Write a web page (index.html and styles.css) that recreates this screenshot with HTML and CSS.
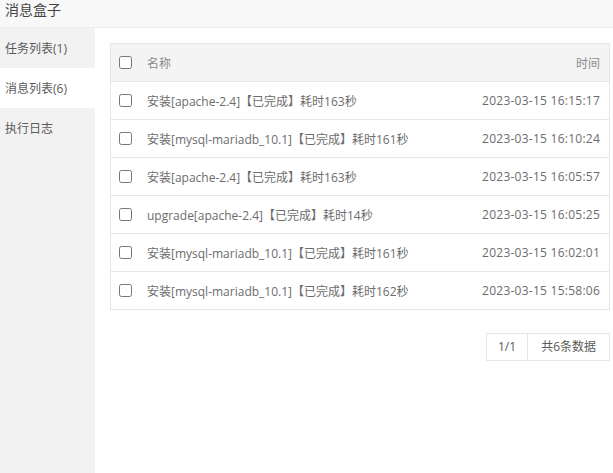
FILE: index.html
```html
<!DOCTYPE html>
<html lang="zh-CN">
<head>
<meta charset="utf-8">
<title>消息盒子</title>
<link rel="stylesheet" href="styles.css">
</head>
<body>
<div class="page">
  <div class="header">消息盒子</div>
  <div class="layout">
    <ul class="side">
      <li class="side-item">任务列表(1)</li>
      <li class="side-item active">消息列表(6)</li>
      <li class="side-item">执行日志</li>
    </ul>
    <div class="main">
      <table class="grid">
        <thead>
          <tr>
            <th class="c-check"><input type="checkbox"></th>
            <th class="c-name">名称</th>
            <th class="c-time">时间</th>
          </tr>
        </thead>
        <tbody>
          <tr><td class="c-check"><input type="checkbox"></td><td class="c-name">安装[apache-2.4]【已完成】耗时163秒</td><td class="c-time">2023-03-15 16:15:17</td></tr>
          <tr><td class="c-check"><input type="checkbox"></td><td class="c-name">安装[mysql-mariadb_10.1]【已完成】耗时161秒</td><td class="c-time">2023-03-15 16:10:24</td></tr>
          <tr><td class="c-check"><input type="checkbox"></td><td class="c-name">安装[apache-2.4]【已完成】耗时163秒</td><td class="c-time">2023-03-15 16:05:57</td></tr>
          <tr><td class="c-check"><input type="checkbox"></td><td class="c-name">upgrade[apache-2.4]【已完成】耗时14秒</td><td class="c-time">2023-03-15 16:05:25</td></tr>
          <tr><td class="c-check"><input type="checkbox"></td><td class="c-name">安装[mysql-mariadb_10.1]【已完成】耗时161秒</td><td class="c-time">2023-03-15 16:02:01</td></tr>
          <tr><td class="c-check"><input type="checkbox"></td><td class="c-name">安装[mysql-mariadb_10.1]【已完成】耗时162秒</td><td class="c-time">2023-03-15 15:58:06</td></tr>
        </tbody>
      </table>
      <div class="pager">
        <span class="pg pg-num">1/1</span><span class="pg pg-count">共6条数据</span>
      </div>
    </div>
  </div>
</div>
</body>
</html>
```

FILE: styles.css
```css
html, body {
  margin: 0;
  padding: 0;
  background: #fff;
}
body {
  font-family: "Open Sans", "Noto Sans CJK SC", sans-serif;
  font-size: 12px;
  color: #6c6c6c;
}
.page {
  display: flex;
  flex-direction: column;
  height: 100vh;
}
.header {
  height: 27px;
  line-height: 19px;
  padding: 0 5px;
  font-size: 14px;
  color: #444;
  background: #f8f8f8;
  border-bottom: 1px solid #ececec;
  flex: none;
}
.layout {
  flex: 1;
  display: flex;
}
.side {
  list-style: none;
  margin: 0;
  padding: 0;
  width: 95px;
  background: #f2f2f2;
  flex: none;
}
.side-item {
  height: 40px;
  line-height: 42px;
  padding-left: 5px;
  color: #5a5a5a;
}
.side-item.active {
  background: #fff;
}
.main {
  flex: 1;
  padding: 15px 3px 0 15px;
}
.grid {
  width: 500px;
  border-collapse: collapse;
  border: 1px solid #e6e6e6;
}
.grid th,
.grid td {
  height: 37px;
  padding: 0;
  border-bottom: 1px solid #e6e6e6;
  font-weight: normal;
  vertical-align: middle;
  white-space: nowrap;
}
.grid thead tr {
  background: #f4f4f4;
}
.grid th {
  color: #8a8a8a;
}
.c-check {
  width: 28px;
  padding-left: 8px !important;
  text-align: left;
}
.c-check input {
  display: block;
  margin: 0;
  width: 13px;
  height: 13px;
}
.c-name {
  text-align: left;
}
.c-time {
  text-align: right;
  padding-right: 9px !important;
}
td.c-time {
  letter-spacing: 0.25px;
}
.pager {
  display: flex;
  justify-content: flex-end;
  margin-top: 23px;
  width: 500px;
}
.pg {
  height: 26px;
  line-height: 26px;
  border: 1px solid #e6e6e6;
  color: #5a5a5a;
}
.pg-num {
  padding: 0 11px;
}
.pg-count {
  border-left: none;
  padding: 0 13px;
}
```
